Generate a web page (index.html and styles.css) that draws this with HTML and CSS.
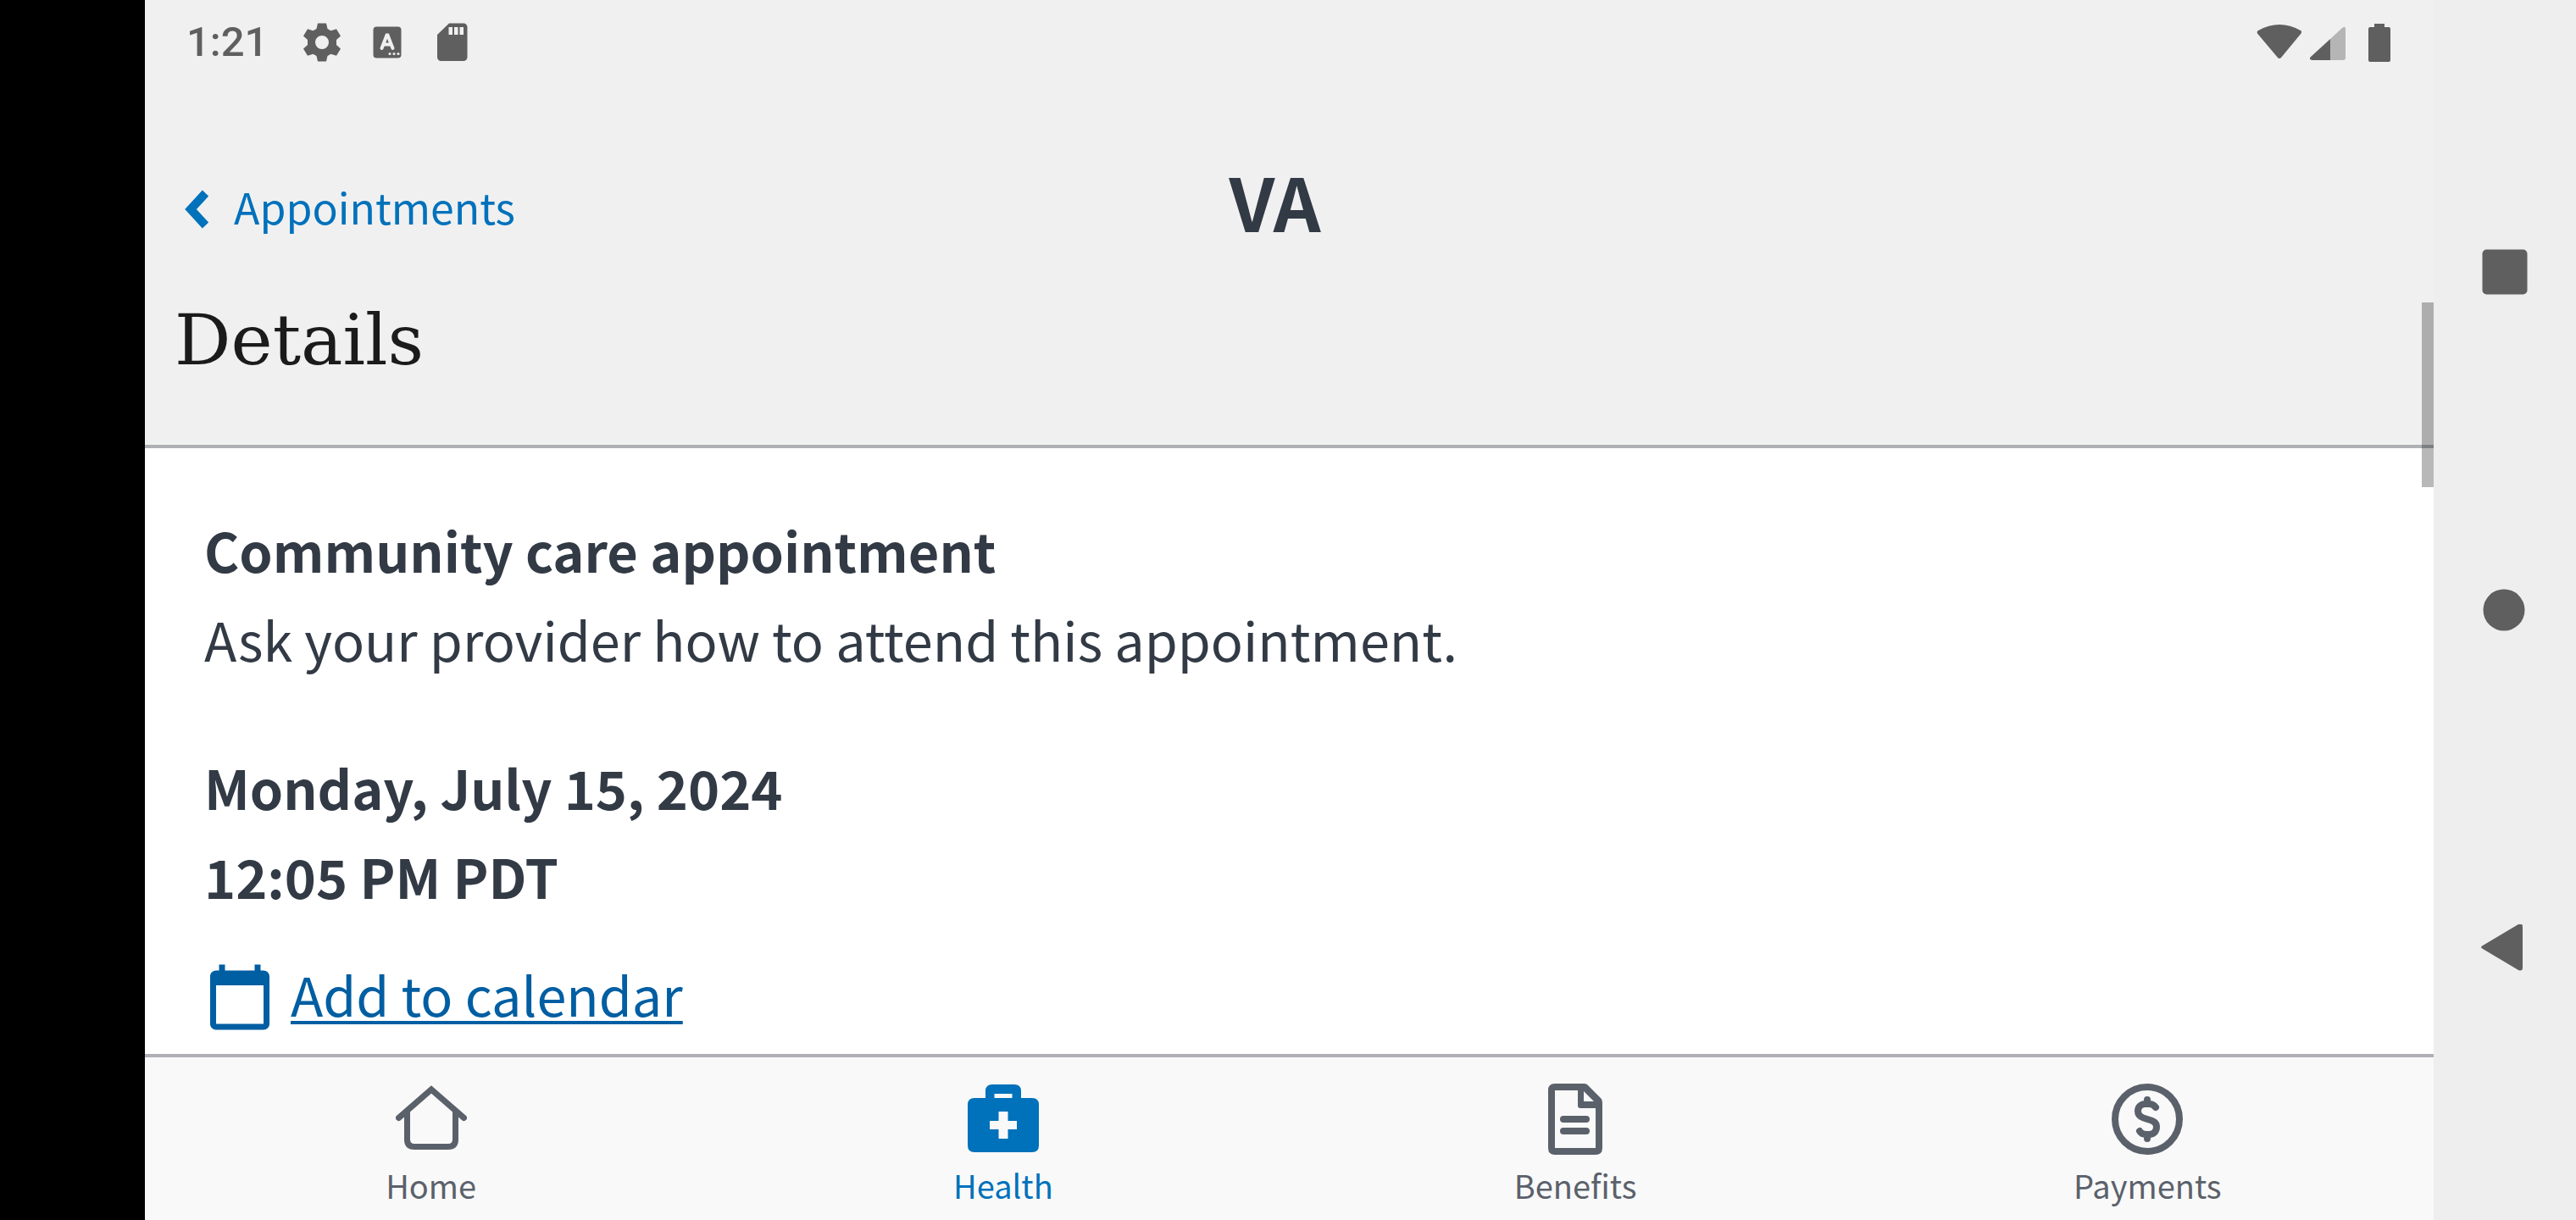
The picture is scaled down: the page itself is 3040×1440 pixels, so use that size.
FILE: index.html
```html
<!DOCTYPE html>
<html lang="en">
<head>
<meta charset="utf-8">
<meta name="viewport" content="width=device-width, initial-scale=1">
<title>Appointment details</title>
<link rel="stylesheet" href="styles.css">
</head>
<body>
<div class="device">
  <div class="cutout"></div>
  <div class="app">
    <header class="header">
      <div class="status">
        <span class="time">1:21</span>
        <div class="notifications">
          <svg class="status-icon" viewBox="0 0 48 48"><path fill-rule="evenodd" d="M19 1.500h10l1.500 6.500 4 2.300 6.500-2 5 8.200-5 4.500v6l5 4.500-5 8.200-6.500-2-4 2.300-1.500 6.500H19L17.500 40l-4-2.300-6.500 2-5-8.200L7 27v-6l-5-4.500 5-8.200 6.500 2 4-2.300zM24 16a8 8 0 1 0 0 16a8 8 0 1 0 0-16z"/></svg>
          <svg class="status-icon" viewBox="0 0 48 48"><rect x="7.500" y="5.500" width="33" height="37" rx="4"/><path class="cut-line" d="M17.500 31l6-15.500h1L30.500 31M20 26.500h8"/><g class="cut"><circle cx="27" cy="37.500" r="1.500"/><circle cx="32" cy="37.500" r="1.500"/><circle cx="37" cy="37.500" r="1.500"/></g></svg>
          <svg class="status-icon" viewBox="0 0 48 48"><path d="M20 1.500h17a4.500 4.500 0 0 1 4.500 4.500v35.500a4.500 4.500 0 0 1-4.500 4.500H10.500A4.500 4.500 0 0 1 6 41.500V15z"/><path class="cut" d="M19.500 6H24v9h-4.500zM26 6h4.500v9H26zM32.500 6H37v9h-4.500z"/></svg>
        </div>
        <div class="signals">
          <svg width="54" height="48" viewBox="0 0 54 48"><path d="M2 10Q27-4 52 10q2 1 .5 3.500L29 42q-2 2-4 0L1 13.500Q0 11 2 10z"/></svg>
          <svg width="42" height="48" viewBox="0 0 42 48"><path class="faint" d="M24 20L37.500 7.500Q42 4 42 8v34q0 3-3 3H24z"/><path d="M24 20v25H3q-5-1-2-4z"/></svg>
          <svg class="battery" width="26" height="48" viewBox="0 0 26 48"><path d="M7 2h12v4h5q2 0 2 2v37q0 2-2 2H2q-2 0-2-2V8q0-2 2-2h5z"/></svg>
        </div>
      </div>
      <div class="topbar">
        <a class="back" href="#appointments"><svg width="29" height="48" viewBox="0 0 29 48"><path d="M24.500 5L7 24l17.500 19"/></svg><span>Appointments</span></a>
        <span class="brand">VA</span>
      </div>
      <h1 class="title">Details</h1>
      <div class="scroll-thumb"></div>
    </header>
    <main class="content">
      <section class="block">
        <h2>Community care appointment</h2>
        <p>Ask your provider how to attend this appointment.</p>
      </section>
      <section class="block">
        <h2>Monday, July 15, 2024</h2>
        <h2>12:05 PM PDT</h2>
      </section>
      <a class="calendar" href="#calendar"><svg width="84" height="84" viewBox="0 0 24 24"><path d="M20 3h-1V1h-2v2H7V1H5v2H4c-1.100 0-2 .9-2 2v16c0 1.100.9 2 2 2h16c1.100 0 2-.9 2-2V5c0-1.100-.9-2-2-2zm0 18H4V8h16v13z"/></svg><span>Add to calendar</span></a>
    </main>
    <nav class="tabs" aria-label="Main">
      <a class="tab" href="#home"><svg viewBox="0 0 84 84"><path class="stroke" d="M3.500 40.500L42 7l38.500 33.500M13.500 33v33q0 8.500 8.500 8.500h40q8.500 0 8.500-8.500V33"/></svg><span>Home</span></a>
      <a class="tab active" href="#health" aria-current="page"><svg viewBox="0 0 84 84"><path fill-rule="evenodd" d="M21 17V9q0-8 8-8h26q8 0 8 8v8h13q8 0 8 8v48q0 8-8 8H8q-8 0-8-8V25q0-8 8-8zM31.500 12v5h21v-5zM36.500 33v11H26v10h10.500v11h11V54H58V44H47.500V33z"/></svg><span>Health</span></a>
      <a class="tab" href="#benefits"><svg viewBox="0 0 84 84"><path fill-rule="evenodd" d="M18 0h35q3 0 5 3l14 14q2 2 2 5v54q0 8-8 8H18q-8 0-8-8V8q0-8 8-8zM18 8v68h48V29H48q-3 0-3-3V8zM52 9v12h12z"/><path class="stroke thick" d="M28 42h27M28 56h27"/></svg><span>Benefits</span></a>
      <a class="tab" href="#payments"><svg viewBox="0 0 84 84"><circle class="stroke thick" cx="42" cy="42" r="38"/><path class="stroke thick" d="M52 28Q49 24 44 24h-4c-6 0-9 4-9 8.500C31 45 53 39 53 51c0 6-4 9-9 9h-3q-6 0-8-4M42 19v5M42 60v5"/></svg><span>Payments</span></a>
    </nav>
  </div>
  <div class="system">
    <button type="button" aria-label="Recent apps"><svg viewBox="0 0 56 56"><rect x="1.500" y="1.500" width="53" height="53" rx="5"/></svg></button>
    <button type="button" aria-label="Home"><svg viewBox="0 0 56 56"><circle cx="27" cy="28" r="24.500"/></svg></button>
    <button type="button" aria-label="Back"><svg viewBox="0 0 56 56"><path d="M2 25L44 0q5-2 5 3v48q0 5-5 3L2 29q-4-2 0-4z"/></svg></button>
  </div>
</div>
</body>
</html>
```
FILE: styles.css
```css
* {
  box-sizing: border-box;
}

body {
  margin: 0;
  font-family: "Noto Sans CJK JP", "Noto Sans", sans-serif;
  color: #323a45;
}

h1, h2, p {
  margin: 0;
}

svg {
  display: block;
  flex: none;
  fill: currentColor;
}

.device {
  display: grid;
  grid-template-columns: 171px 1fr 168px;
  height: 100vh;
}

.cutout {
  background: #000;
}

.app {
  display: flex;
  flex-direction: column;
  min-width: 0;
  min-height: 0;
}

.header {
  position: relative;
  flex: none;
  padding-bottom: 74px;
  background: #f0f0f0;
  border-bottom: 4px solid #aeb0b5;
}

.status {
  display: flex;
  align-items: center;
  height: 100px;
  padding: 0 51px 0 49px;
  color: #5f5f5f;
}

.time {
  font: 500 49px/60px Roboto, sans-serif;
}

.notifications {
  display: flex;
  gap: 29px;
  margin-left: 40px;
}

.status-icon {
  width: 48px;
  height: 48px;
}

.cut {
  fill: #f0f0f0;
}

.cut-line {
  fill: none;
  stroke: #f0f0f0;
  stroke-width: 4;
  stroke-linecap: round;
}

.faint {
  fill: #b5b5b5;
}

.signals {
  display: flex;
  gap: 9px;
  margin-left: auto;
}

.battery {
  margin-left: 18px;
}

.topbar {
  display: grid;
  grid-template-columns: 1fr auto 1fr;
  align-items: start;
  margin-top: 100px;
  padding: 0 69px 0 35px;
}

.back {
  display: flex;
  align-items: center;
  justify-self: start;
  gap: 29px;
  padding-left: 12px;
  font-size: 50px;
  line-height: 86px;
  color: #0071bb;
  text-decoration: none;
}

.back svg {
  margin-top: 8px;
}

.back path {
  fill: none;
  stroke: currentColor;
  stroke-width: 10;
}

.brand {
  font-size: 87px;
  font-weight: 700;
  line-height: 72px;
}

.title {
  margin-top: 67px;
  padding: 0 35px;
  font: 400 83px/98px "DejaVu Serif", serif;
  color: #1b1b1b;
}

.scroll-thumb {
  position: absolute;
  top: 357px;
  right: 0;
  width: 14px;
  height: 218px;
  background: rgba(0, 0, 0, 0.28);
}

.content {
  flex: 1;
  min-height: 0;
  overflow: hidden;
  padding: 67px 70px 0;
  background: #fff;
  font-size: 63px;
  line-height: 105px;
}

.block {
  margin-bottom: 70px;
}

.block + .block {
  margin-bottom: 34px;
}

h2 {
  font-size: 63px;
  font-weight: 700;
}

.calendar {
  display: inline-flex;
  align-items: center;
  gap: 18px;
  color: #005ea2;
  text-decoration: none;
}

.calendar svg {
  margin-top: 8px;
}

.calendar span {
  text-decoration: underline;
  text-decoration-thickness: 4px;
  text-underline-offset: 5px;
  text-decoration-skip-ink: none;
}

.tabs {
  display: flex;
  flex: none;
  padding: 31px 0 15px;
  background: #f9f9f9;
  border-top: 4px solid #aeb0b5;
}

.tab {
  display: flex;
  flex: 1;
  flex-direction: column;
  align-items: center;
  gap: 10px;
  font-size: 38px;
  line-height: 52px;
  color: #5b616b;
  text-decoration: none;
}

.tab svg {
  width: 84px;
  height: 84px;
}

.active {
  color: #0071bb;
}

.stroke {
  fill: none;
  stroke: currentColor;
  stroke-width: 7;
  stroke-linecap: round;
}

.thick {
  stroke-width: 8;
}

.system {
  display: grid;
  grid-template-rows: repeat(3, 1fr);
  padding: 121px 0;
  background: #eee;
}

.system button {
  display: grid;
  place-items: center;
  padding: 0;
  border: 0;
  background: none;
  color: #5f5f5f;
}

.system svg {
  width: 56px;
  height: 56px;
}
```
